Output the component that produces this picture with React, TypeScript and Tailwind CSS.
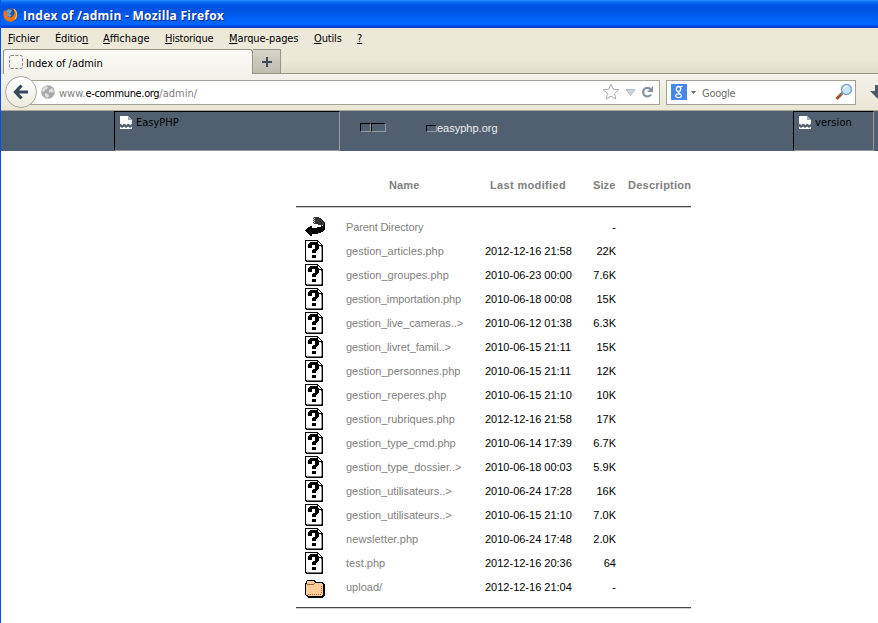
import React from "react";

const files: [string, string, string, string][] = [
  ["Parent Directory", "", "-", "tracking-[-0.13px]"],
  ["gestion_articles.php", "2012-12-16 21:58", "22K", ""],
  ["gestion_groupes.php", "2010-06-23 00:00", "7.6K", ""],
  ["gestion_importation.php", "2010-06-18 00:08", "15K", "tracking-[-0.1px]"],
  ["gestion_live_cameras..>", "2010-06-12 01:38", "6.3K", "tracking-[-0.08px]"],
  ["gestion_livret_famil..>", "2010-06-15 21:11", "15K", "tracking-[-0.08px]"],
  ["gestion_personnes.php", "2010-06-15 21:11", "12K", ""],
  ["gestion_reperes.php", "2010-06-15 21:10", "10K", ""],
  ["gestion_rubriques.php", "2012-12-16 21:58", "17K", ""],
  ["gestion_type_cmd.php", "2010-06-14 17:39", "6.7K", "tracking-[-0.05px]"],
  ["gestion_type_dossier..>", "2010-06-18 00:03", "5.9K", "tracking-[-0.02px]"],
  ["gestion_utilisateurs..>", "2010-06-24 17:28", "16K", "tracking-[-0.05px]"],
  ["gestion_utilisateurs..>", "2010-06-15 21:10", "7.0K", "tracking-[-0.05px]"],
  ["newsletter.php", "2010-06-24 17:48", "2.0K", "tracking-[0.1px]"],
  ["test.php", "2012-12-16 20:36", "64", ""],
  ["upload/", "2012-12-16 21:04", "-", ""],
];

function UnknownIcon() {
  return (
    <svg width="20" height="22" viewBox="0 0 20 22" shapeRendering="crispEdges">
      <path d="M0 0h13v1h1v1h1v1h1v1h1v1h1v17H1v-1H0z" fill="#000" />
      <path d="M1 1h11v5h4v14H1z" fill="#fff" />
      <path d="M13 2h1v1h1v1h1v1h-3z" fill="#fff" />
      <path d="M16 7h1v13h-1z" fill="#999" />
      <path d="M2 20h14v1H2z" fill="#777" />
      <path d="M5 2h7v1h1v1h1v5h-1v1h-1v1h-1v2H7v-3h1V9h2V5H7v3H3V4h1V3h1zM7 15h4v3H7z" fill="#000" />
      <path d="M12 3h1v1h1v5h-1v1h-3V5h2z" fill="#000" />
    </svg>
  );
}

function BackDirIcon() {
  return (
    <svg width="20" height="22" viewBox="0 0 20 22" shapeRendering="crispEdges">
      <path d="M8 1h6v1h2v1h1v1h1v1h1v1h1v3h-3v1h-1V9h-3V8H8z" fill="#333" />
      <path d="M8 1h1v1H8zM9 2h1v1H9zM8 3h1v1H8zM9 4h1v1H9zM8 5h1v1H8zM9 6h1v1H9zM8 7h1v1H8z" fill="#ddd" />
      <path d="M20 7v7h-1v1h-1v1h-2v1h-3v1H7v2H5v-1H4v-1H3v-1H2v-1H1v-1H0v-1h1v-1h1v-1h1v-1h2v-1h2v2h5v-1h4v-1h2V9h1V7z" fill="#000" />
    </svg>
  );
}

function FolderIcon() {
  return (
    <svg className="relative top-[2px]" width="20" height="18" viewBox="0 0 20 18" shapeRendering="crispEdges">
      <path d="M2 0h8v1h1v1h7v1h1v1h1v12h-1v1h-1v1H3v-1H2v-1H1v-1H0V3h1V1h1z" fill="#000" />
      <path d="M2 1h7v1h1v1h7v1h1v11h-1v1H3v-1H1V4h1z" fill="#ffcc99" />
      <path d="M2 4h7V3h1v1H9v1H2z" fill="#996633" />
      <path d="M3 14h1v1H3zM5 14h1v1H5zM7 14h1v1H7zM9 14h1v1H9zM11 14h1v1h-1zM13 14h1v1h-1zM15 14h1v1h-1zM16 12h1v1h-1zM16 10h1v1h-1zM16 8h1v1h-1zM16 6h1v1h-1z" fill="#996633" />
    </svg>
  );
}

function BrokenImage() {
  return (
    <svg width="12" height="14" viewBox="0 0 12 14">
      <path d="M0 0h8l4 4v5l-1 1-2-2-2 2-2-2-2 2-2-2-1 1z" fill="#fff" />
      <path d="M8 0l4 4H8z" fill="#9aa4ae" />
      <path d="M0 7.500l2 2 2-2 2 2 2-2 2 2 2-2v2.500l-2 2-2-2-2 2-2-2-2 2-2-2z" fill="#506070" />
      <path d="M0 10.500l2 1.500 2-1.500 2 1.500 2-1.500 2 1.500 2-1.500V13H0z" fill="#fff" />
    </svg>
  );
}

function Firefox() {
  return (
    <svg width="16" height="16" viewBox="0 0 16 16">
      <circle cx="7.4" cy="8" r="6.8" fill="#e4681c" />
      <circle cx="7" cy="6.2" r="5" fill="#24509c" />
      <path d="M3 4c2-2 4-2 6-1L8 6 6 7l3 1-2 2-3-1z" fill="#5fa3dc" />
      <path d="M1 3l2 2 2 .3 1 1-2 1.500c1 3 4 3.500 6 1.500 2-2 2-5 0-7.500 4 1 5 6 3.500 9-2 4-8 5-11 1.500C.3 10 .2 6 1 3z" fill="#e9741b" />
      <path d="M11 2c3 2 3.500 7 1 10 3-5 1-8-1-10z" fill="#ffd94d" stroke="#ffd94d" strokeWidth=".6" />
    </svg>
  );
}

function Menu({ a, k, b, w }: { a?: string; k: string; b?: string; w: string }) {
  return (
    <span className={"shrink-0 " + w}>
      {a}
      <span className="underline decoration-1 underline-offset-[1px]">{k}</span>
      {b}
    </span>
  );
}

const ui = "font-['DejaVu_Sans_Condensed','DejaVu_Sans',sans-serif]";

export default function App() {
  return (
    <div className={"flex h-[623px] w-[878px] flex-col overflow-hidden border-l border-[#0054e3] bg-white text-[11px] leading-[14px] whitespace-nowrap text-black " + ui}>
      <header className="flex h-7 shrink-0 items-center bg-[linear-gradient(#2a8cff_0px,#0a6cf5_2px,#0054e3_6px,#0054e3_12px,#0062fa_19px,#0066ff_25px,#0045d8_26px,#003dd0_28px)] pt-0.5 pl-[2px]">
        <Firefox />
        <span className="ml-1 pt-0.5 font-['Open_Sans','Noto_Sans',sans-serif] text-[12px] font-bold tracking-[0.25px] text-white [text-shadow:1px_1px_0_#0a2a80]">
          Index of /admin - Mozilla Firefox
        </span>
      </header>

      <nav className="flex h-[21px] shrink-0 items-center bg-[#ece9d8] pl-[7px]">
        <Menu w="w-[47px] tracking-[-0.1px]" k="F" b="ichier" />
        <Menu w="w-[48px] tracking-[-0.15px]" a="Éditio" k="n" />
        <Menu w="w-[62px]" k="A" b="ffichage" />
        <Menu w="w-[64px] tracking-[-0.25px]" k="H" b="istorique" />
        <Menu w="w-[85px] tracking-[-0.1px]" k="M" b="arque-pages" />
        <Menu w="w-[43px] tracking-[-0.15px]" k="O" b="utils" />
        <Menu w="w-[10px]" k="?" />
      </nav>

      <div className="flex h-[25px] shrink-0 bg-linear-to-b from-[#ece9d8] from-40% to-[#dfdccb] pl-[2px]">
        <div className="flex w-[250px] items-center rounded-t-[3px] border border-b-0 border-[#97958a] bg-linear-to-b from-[#fbfaf6] to-[#f3f2eb] pl-[5px]">
          <svg width="14" height="14" viewBox="0 0 14 14">
            <rect x=".5" y=".5" width="13" height="13" rx="1.500" fill="none" stroke="#888" strokeDasharray="3 1.500" />
          </svg>
          <span className="ml-[3px] pt-[3px] tracking-[-0.05px]">Index of /admin</span>
        </div>
        <div className="flex w-[28px] items-center justify-center border border-l-0 border-[#97958a] bg-linear-to-b from-[#d6d4c7] to-[#bfbdb0]">
          <svg width="10" height="10" viewBox="0 0 10 10">
            <path d="M5 0v10M0 5h10" stroke="#3b4b5c" strokeWidth="2" />
          </svg>
        </div>
        <div className="flex-1 border-b border-[#97958a]" />
      </div>

      <div className="flex h-[37px] shrink-0 items-center border-b border-[#aca899] bg-linear-to-b from-[#f3f2eb] to-[#ebe7d6]">
        <div className="z-10 ml-1 flex size-8 shrink-0 items-center justify-center rounded-full border border-[#a8a8a4] bg-linear-to-b from-white to-[#eeecdf]">
          <svg width="16" height="16" viewBox="0 0 16 16">
            <path d="M8.500 1.500L2.500 8l6 6.500M3 8h12" fill="none" stroke="#34495e" strokeWidth="3.200" />
          </svg>
        </div>
        <div className="-ml-2 flex h-[25px] w-[631px] shrink-0 items-center border border-[#a3a198] bg-white pl-[11px]">
          <svg width="14" height="14" viewBox="0 0 14 14">
            <circle cx="7" cy="7" r="6.800" fill="#a9a9a9" />
            <path d="M2 3l3-2 2 1-1 2-2 1-1 2-2-1zM8 5l3-2 2 3-2 2-1-1-2 1zM4 8l3 1 1 2-2 2-2-2z" fill="#dedede" />
          </svg>
          <span className="ml-[4px] pt-[3px] text-[#808080]">www.<span className="tracking-[-0.35px] text-black">e-commune.org</span>/admin/</span>
          <svg className="ml-auto" width="54" height="18" viewBox="0 0 54 18">
            <path d="M9 1l2.200 5.200 5.600.5-4.200 3.800 1.200 5.500L9 13.200 4.200 16l1.200-5.500L1.200 6.700l5.600-.5z" fill="#fff" stroke="#aaa" />
            <path d="M24 6.500h9l-4.500 6z" fill="#ccd5df" stroke="#a7b2be" strokeWidth=".8" />
            <path d="M48.500 6.200A4.300 4.300 0 1 0 49 11.500" fill="none" stroke="#8592a0" strokeWidth="2.200" />
            <path d="M51 3v6h-6z" fill="#8592a0" />
          </svg>
          <span className="w-[3px]" />
        </div>
        <div className="ml-[6px] flex h-[25px] w-[190px] shrink-0 items-center border border-[#a3a198] bg-white pr-[2px] pl-1">
          <div className="flex size-4 items-center justify-center bg-[#4787ed]">
            <svg width="12" height="16" viewBox="0 0 12 16">
              <ellipse cx="5.500" cy="5" rx="2.200" ry="2.500" fill="none" stroke="#fff" strokeWidth="1.300" />
              <ellipse cx="5.500" cy="11.700" rx="2.800" ry="1.900" fill="none" stroke="#fff" strokeWidth="1.200" />
              <path d="M6 2.500h3.500M6.500 7.500L5.500 8.800l2 1.200" fill="none" stroke="#fff" strokeWidth="1.100" />
            </svg>
          </div>
          <svg className="ml-1" width="5" height="3" viewBox="0 0 5 3"><path d="M0 0h5L2.500 3z" fill="#666" /></svg>
          <span className="ml-[6px] pt-[3px] tracking-[-0.25px] text-[#6d6d6d]">Google</span>
          <svg className="ml-auto" width="18" height="18" viewBox="0 0 18 18">
            <path d="M1.500 16l5.500-5.500" stroke="#a35330" strokeWidth="3" />
            <path d="M5 12l3-3" stroke="#777" strokeWidth="2" />
            <circle cx="11.500" cy="6.500" r="5" fill="#c6e5fb" stroke="#7fa4cf" strokeWidth="1.500" />
            <path d="M8.500 6a3 3 0 0 1 4-2.500" stroke="#fff" strokeWidth="1.500" fill="none" />
          </svg>
        </div>
        <svg className="ml-[14px] shrink-0" width="16" height="16" viewBox="0 0 16 16">
          <path d="M5 1h6v6h5l-8 8-8-8h5z" fill="#4a5a6b" />
        </svg>
      </div>

      <div className="flex h-10 shrink-0 bg-[#506070]">
        <div className="ml-[113px] flex w-[226px] items-start border border-t-black border-r-[#999] border-b-[#999] border-l-black pt-1 pl-[5px]">
          <BrokenImage />
          <span className="ml-[4px]">EasyPHP</span>
        </div>
        <div className="flex w-[453px] items-start pt-3 pl-5 text-[#eee]">
          <span className="h-[9px] w-[11px] border border-t-black border-r-[#999] border-b-[#999] border-l-black" />
          <span className="h-[9px] w-[15px] border border-t-black border-r-[#999] border-b-[#999] border-l-black" />
          <span className="mt-0.5 ml-10 h-[7px] w-[11px] border border-t-black border-r-[#999] border-b-[#999] border-l-black" />
          <span className="-mt-[2px] font-['Liberation_Sans',Arial,sans-serif]">easyphp.org</span>
        </div>
        <div className="flex w-[81px] items-start border border-t-black border-r-[#999] border-b-[#999] border-l-black pt-1 pl-[5px]">
          <BrokenImage />
          <span className="ml-[4px] tracking-[0.1px]">version</span>
        </div>
      </div>

      <main className="ml-[295px] flex w-[395px] flex-col font-['Liberation_Sans',Arial,sans-serif]">
        <div className="flex h-[55px] items-end pb-[14px] font-bold text-[#808080]">
          <span className="w-[93px] shrink-0" />
          <span className="w-[101px] shrink-0 tracking-[0.15px]">Name</span>
          <span className="w-[103px] shrink-0 tracking-[0.35px]">Last modified</span>
          <span className="w-[35px] shrink-0 tracking-[0.1px]">Size</span>
          <span className="tracking-[0.25px]">Description</span>
        </div>
        <div className="h-[2px] border-t border-[#444] bg-[#ccc]" />
        <div className="flex flex-col pt-[7px]">
          {files.map(([name, date, size, tr], i) => (
            <div key={i} className="flex h-6 items-center">
              <span className="w-[50px] pl-[9px]">
                {i === 0 ? <BackDirIcon /> : i === files.length - 1 ? <FolderIcon /> : <UnknownIcon />}
              </span>
              <a className={"w-[139px] text-[#808080] " + tr}>{name}</a>
              <span className="w-[89px]">{date}</span>
              <span className="w-[42px] text-right">{size}</span>
            </div>
          ))}
        </div>
        <div className="mt-2 h-[2px] border-t border-[#444] bg-[#ccc]" />
      </main>
    </div>
  );
}
